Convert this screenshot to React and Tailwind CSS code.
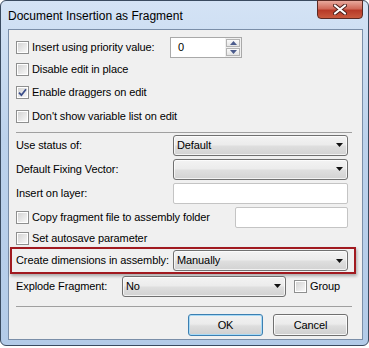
import React from 'react';

// ── Win7-ish checkbox ────────────────────────────────────────────────────────
const Check = ({ checked }) => (
  <span className="w-[13px] h-[13px] shrink-0 border border-[#8e8f8f] bg-white p-px flex">
    <span className="flex-1 flex items-center justify-center bg-[linear-gradient(135deg,#d4d4d4,#f7f7f7)]">
      {checked && (
        <svg width="9" height="9" viewBox="0 0 9 9">
          <path d="M1 4.6 L3.4 7.2 L8 1.2" fill="none" stroke="#3b4e8a" strokeWidth="1.8" />
        </svg>
      )}
    </span>
  </span>
);

const CheckLabel = ({ label, checked, className = '' }) => (
  <div className={`flex items-center gap-[3px] ${className}`}>
    <Check checked={checked} />
    <span>{label}</span>
  </div>
);

// ── Combo box ────────────────────────────────────────────────────────────────
const Combo = ({ value, className = '' }) => (
  <div
    className={`h-[21px] border border-[#707070] rounded-[3px] flex items-center pl-[3px] pr-[4px] bg-[linear-gradient(to_bottom,#f3f3f3,#ececec_45%,#dedede_55%,#d2d2d2)] shadow-[inset_0_0_0_1px_rgba(255,255,255,0.7)] ${className}`}
  >
    <span className="flex-1 leading-none">{value}</span>
    <svg width="7" height="4" viewBox="0 0 7 4">
      <path d="M0 0 H7 L3.5 4 Z" fill="#111" />
    </svg>
  </div>
);

const TextBox = ({ className = '' }) => (
  <div className={`h-[21px] border border-[#c4c4c4] rounded-[2px] bg-white ${className}`} />
);

const Spin = () => (
  <div className="w-[72px] h-[21px] border border-[#a9a9a9] bg-white flex">
    <span className="flex-1 pl-[7px] flex items-center">0</span>
    <div className="w-[16px] flex flex-col p-px gap-px bg-[#f0f0f0]">
      {[0, 1].map((i) => (
        <div key={i} className="flex-1 border border-[#b3b3b3] bg-[linear-gradient(to_bottom,#fafafa,#e4e4e4)] flex items-center justify-center">
          <svg width="7" height="4" viewBox="0 0 7 4">
            <path d={i === 0 ? 'M0 4 H7 L3.5 0 Z' : 'M0 0 H7 L3.5 4 Z'} fill="#4b5b8c" />
          </svg>
        </div>
      ))}
    </div>
  </div>
);

const Separator = () => <div className="ml-[7px] w-[336px] h-px bg-[#a0a0a0]" />;

const LabelRow = ({ label, children }) => (
  <div className="h-[24px] flex items-center pl-[7px]">
    <span className="w-[157px] shrink-0">{label}</span>
    {children}
  </div>
);

export default function App() {
  return (
    <div className="w-[369px] h-[348px] bg-white" style={{ fontFamily: '"Liberation Sans", Arial, sans-serif' }}>
      <div className="w-[369px] h-[346px] border border-[#3a4b60] rounded-[6px] bg-[linear-gradient(to_bottom,#d4e3f5,#bcd2ec_40%,#b3cbe8)] flex flex-col">
        {/* Title bar */}
        <div className="h-[28px] flex items-start pl-[7px] pr-[5px]">
          <span className="mt-[6px] text-[12px] text-black">Document Insertion as Fragment</span>
          <div className="ml-auto mt-[-1px] w-[46px] h-[19px] rounded-b-[4px] border border-[#5a2a24] bg-[linear-gradient(to_bottom,#e8a99d,#d06a5a_45%,#b73a28_55%,#c85a3e)] flex items-center justify-center">
            <svg width="14" height="11" viewBox="0 0 14 11">
              <path d="M2 1.5 L12 9.5 M12 1.5 L2 9.5" stroke="#4a1f1a" strokeWidth="4" strokeLinecap="round" />
              <path d="M2 1.5 L12 9.5 M12 1.5 L2 9.5" stroke="#fff" strokeWidth="2.2" strokeLinecap="round" />
            </svg>
          </div>
        </div>

        {/* Client area */}
        <div className="ml-[7px] w-[355px] h-[311px] border border-[#7a8ea8] bg-[#f0f0f0] text-[11px] tracking-[-0.1px] text-black flex flex-col pt-[6px]">
          <div className="h-[22px] flex items-center pl-[7px]">
            <CheckLabel label="Insert using priority value:" className="w-[154px]" />
            <Spin />
          </div>
          <div className="h-[23px] flex items-center pl-[7px]">
            <CheckLabel label="Disable edit in place" />
          </div>
          <div className="h-[23px] flex items-center pl-[7px]">
            <CheckLabel label="Enable draggers on edit" checked />
          </div>
          <div className="h-[24px] flex items-center pl-[7px]">
            <CheckLabel label="Don't show variable list on edit" />
          </div>

          <div className="mt-[4px]">
            <Separator />
          </div>

          <LabelRow label="Use status of:">
            <Combo value="Default" className="w-[175px]" />
          </LabelRow>
          <LabelRow label="Default Fixing Vector:">
            <Combo value="" className="w-[175px]" />
          </LabelRow>
          <LabelRow label="Insert on layer:">
            <TextBox className="w-[175px]" />
          </LabelRow>
          <div className="h-[24px] flex items-center pl-[7px]">
            <CheckLabel label="Copy fragment file to assembly folder" className="w-[219px]" />
            <TextBox className="w-[113px]" />
          </div>
          <div className="h-[18px] flex items-center pl-[7px]">
            <CheckLabel label="Set autosave parameter" />
          </div>

          {/* Highlighted row */}
          <div className="ml-[1px] w-[346px] h-[27px] border-2 border-[#a11a20] shadow-[1px_2px_3px_rgba(0,0,0,0.3)] flex items-center pl-[4px]">
            <span className="w-[157px] shrink-0">Create dimensions in assembly:</span>
            <Combo value="Manually" className="w-[175px] h-[20px]" />
          </div>

          <div className="h-[24px] flex items-center pl-[7px]">
            <span className="w-[106px] shrink-0">Explode Fragment:</span>
            <Combo value="No" className="w-[164px]" />
            <CheckLabel label="Group" className="ml-[8px] gap-[2px]" />
          </div>

          <div className="mt-[8px]">
            <Separator />
          </div>

          <div className="mt-[7px] flex justify-end gap-[10px] pr-[14px]">
            <button
              type="button"
              className="w-[75px] h-[22px] rounded-[3px] border border-[#3c7fb1] bg-[linear-gradient(to_bottom,#f2f2f2,#ebebeb_45%,#dddddd_55%,#cfcfcf)] shadow-[inset_0_0_0_1px_#a8daf6]"
            >
              OK
            </button>
            <button
              type="button"
              className="w-[75px] h-[22px] rounded-[3px] border border-[#707070] bg-[linear-gradient(to_bottom,#f2f2f2,#ebebeb_45%,#dddddd_55%,#cfcfcf)] shadow-[inset_0_0_0_1px_rgba(255,255,255,0.8)]"
            >
              Cancel
            </button>
          </div>
        </div>
      </div>
    </div>
  );
}
